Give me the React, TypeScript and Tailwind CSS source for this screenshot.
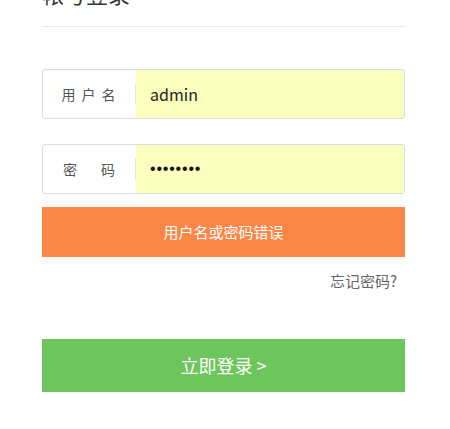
export default function App() {
  const font = { fontFamily: '"Noto Sans CJK SC", "Microsoft YaHei", sans-serif' };
  return (
    <div className="min-h-[429px] w-[450px] bg-white overflow-hidden" style={font}>
      <div className="ml-[42px] w-[363px]">
        {/* Title */}
        <div className="mt-[-18px] border-b border-[#e8e8e8] pb-[22px]">
          <h3 className="text-[22px] leading-[22px] text-[#333]">帐号登录</h3>
        </div>

        <form className="mt-[42px]" onSubmit={(e) => e.preventDefault()}>
          {/* Username */}
          <div className="flex h-[50px] items-center overflow-hidden rounded-[3px] border border-[#dcdcdc]">
            <label className="flex h-full w-[92px] shrink-0 items-center justify-center pl-[5px] text-[14px] tracking-[6px] text-[#555]">
              用户名
            </label>
            <div className="h-[22px] w-px bg-[#e6e6e6]" />
            <input
              className="h-full flex-1 bg-[#faffbd] pl-[14px] text-[16px] text-[#222] outline-none"
              defaultValue="admin"
            />
          </div>

          {/* Password */}
          <div className="mt-[25px] flex h-[50px] items-center overflow-hidden rounded-[3px] border border-[#dcdcdc]">
            <label className="flex h-full w-[92px] shrink-0 items-center justify-center gap-[24px] text-[14px] text-[#555]">
              <span>密</span>
              <span>码</span>
            </label>
            <div className="h-[22px] w-px bg-[#e6e6e6]" />
            <input
              type="password"
              className="h-full flex-1 bg-[#faffbd] pl-[14px] font-['Liberation_Sans',sans-serif] text-[16px] tracking-[0.8px] text-[#111] outline-none"
              defaultValue="12345678"
            />
          </div>

          {/* Error */}
          <div className="mt-[13px] flex h-[50px] items-center justify-center bg-[#fc8646] text-[15px] text-white">
            用户名或密码错误
          </div>

          <div className="mt-[14px] flex justify-end pr-[8px]">
            <a className="text-[15px] leading-[20px] text-[#666]" href="#">
              忘记密码?
            </a>
          </div>

          <button
            type="submit"
            className="mt-[48px] flex h-[53px] w-full items-center justify-center bg-[#6dc65c] text-[18px] text-white"
          >
            立即登录 &gt;
          </button>
        </form>
      </div>
    </div>
  );
}
